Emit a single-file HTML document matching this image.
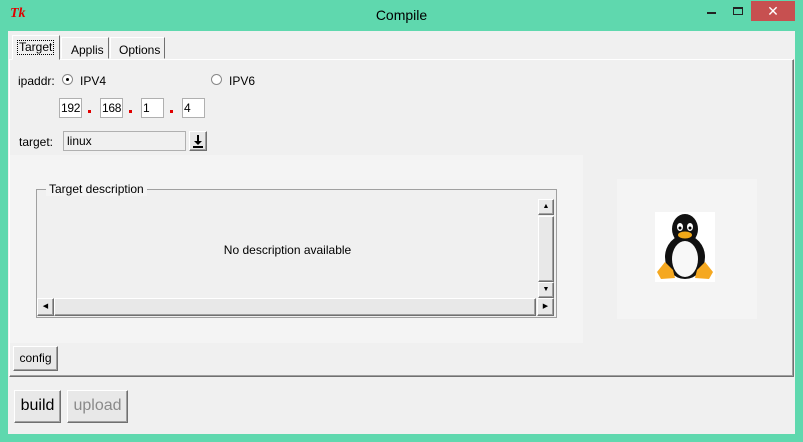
<!DOCTYPE html>
<html><head><style>
*{box-sizing:border-box;margin:0;padding:0}
body{width:803px;height:442px;background:#5fd8ae;font-family:"Liberation Sans",sans-serif;font-size:12px;color:#000;position:relative;overflow:hidden}
.a{position:absolute}
.client{left:8px;top:31px;width:787px;height:403px;background:#f0f0f0}
.btn{position:absolute;background:#e8e8e8;border:1px solid;border-color:#fff #707070 #707070 #fff;box-shadow:inset -1px -1px 0 #a0a0a0;text-align:center}
.entry{position:absolute;background:#fff;border:1px solid #b0b0b0;height:20px;padding:2px 0 0 1px;font-size:12px;letter-spacing:-0.3px;overflow:hidden}
.dot{position:absolute;width:3px;height:3px;background:#e00000}
.radio{position:absolute;width:11px;height:11px;border-radius:50%;border:1px solid #888;background:#fff}
</style></head><body>
<div class="a" style="left:10px;top:6px;color:#e00000;font-family:'Liberation Serif',serif;font-style:italic;font-weight:bold;font-size:14px">Tk</div>
<div class="a" style="left:0;width:803px;top:7px;text-align:center;font-size:14px;color:#000">Compile</div>
<div class="a" style="left:707px;top:12px;width:9px;height:2px;background:#222"></div>
<div class="a" style="left:733px;top:7px;width:10px;height:8px;border:1px solid #222;border-top-width:2px"></div>
<div class="a" style="left:751px;top:1px;width:44px;height:20px;background:#c75050;color:#fff;text-align:center;font-size:14px;line-height:20px">✕</div>
<div class="a client"></div>
<div class="a" style="left:9px;top:59px;width:785px;height:318px;border:1px solid;border-color:#fff #707070 #707070 #fff;background:#f0f0f0;box-shadow:inset -1px -1px 0 #a0a0a0"></div>
<div class="a" style="left:12px;top:35px;width:48px;height:25px;background:#f0f0f0;border:1px solid;border-color:#fff #707070 #f0f0f0 #fff"></div>
<div class="a" style="left:17px;top:40px;border:1px dotted #000;padding:0 1px;font-size:12px;line-height:13px">Target</div>
<div class="a" style="left:61px;top:37px;width:48px;height:22px;background:#f0f0f0;border:1px solid;border-color:#fff #707070 transparent #fff;padding:5px 0 0 9px">Applis</div>
<div class="a" style="left:110px;top:37px;width:55px;height:22px;background:#f0f0f0;border:1px solid;border-color:#fff #707070 transparent #fff;padding:5px 0 0 8px">Options</div>
<div class="a" style="left:18px;top:74px">ipaddr:</div>
<div class="radio" style="left:62px;top:74px"><div class="a" style="left:3px;top:3px;width:3px;height:3px;background:#000;border-radius:50%"></div></div>
<div class="a" style="left:80px;top:74px">IPV4</div>
<div class="radio" style="left:211px;top:74px"></div>
<div class="a" style="left:229px;top:74px">IPV6</div>
<div class="entry" style="left:59px;top:98px;width:23px">192</div>
<div class="dot" style="left:88px;top:110px"></div>
<div class="entry" style="left:100px;top:98px;width:23px">168</div>
<div class="dot" style="left:129px;top:110px"></div>
<div class="entry" style="left:141px;top:98px;width:23px">1</div>
<div class="dot" style="left:170px;top:110px"></div>
<div class="entry" style="left:182px;top:98px;width:23px">4</div>
<div class="a" style="left:19px;top:135px">target:</div>
<div class="a" style="left:63px;top:131px;width:123px;height:20px;background:#f0f0f0;border:1px solid #b0b0b0;padding:2px 0 0 3px">linux</div>
<div class="btn" style="left:189px;top:131px;width:18px;height:20px"><svg width="16" height="18" viewBox="0 0 16 18"><path d="M7 3h2v6h3l-4 4-4-4h3z" fill="#000"/><rect x="3" y="14" width="10" height="2" fill="#000"/></svg></div>
<div class="a" style="left:10px;top:155px;width:573px;height:188px;background:#f4f4f4"></div>
<div class="a" style="left:36px;top:189px;width:521px;height:129px;border:1px solid #a0a0a0;background:#f0f0f0"></div>
<div class="a" style="left:46px;top:182px;background:#f4f4f4;padding:0 3px">Target description</div>
<div class="a" style="left:37px;top:190px;width:501px;height:108px;text-align:center;line-height:120px">No description available</div>
<div class="btn" style="left:538px;top:199px;width:16px;height:16px;font-size:7px;line-height:14px">▲</div>
<div class="btn" style="left:538px;top:216px;width:16px;height:66px"></div>
<div class="btn" style="left:538px;top:282px;width:16px;height:16px;font-size:7px;line-height:14px">▼</div>
<div class="btn" style="left:37px;top:298px;width:17px;height:18px;font-size:7px;line-height:16px">◀</div>
<div class="btn" style="left:54px;top:298px;width:482px;height:18px"></div>
<div class="btn" style="left:537px;top:298px;width:17px;height:18px;font-size:7px;line-height:16px">▶</div>
<div class="a" style="left:617px;top:179px;width:140px;height:140px;background:#f4f4f4"></div>
<svg class="a" style="left:655px;top:212px" width="60" height="70" viewBox="0 0 60 70">
<rect width="60" height="70" fill="#fff"/>
<ellipse cx="30" cy="45" rx="20" ry="22" fill="#111"/>
<ellipse cx="30" cy="17" rx="13" ry="15" fill="#111"/>
<ellipse cx="30" cy="47" rx="13" ry="18" fill="#f8f8f8"/>
<ellipse cx="25" cy="15" rx="3" ry="4" fill="#fff"/><ellipse cx="35" cy="15" rx="3" ry="4" fill="#fff"/>
<circle cx="25" cy="16" r="1.5" fill="#000"/><circle cx="35" cy="16" r="1.5" fill="#000"/>
<ellipse cx="30" cy="23" rx="7" ry="3.5" fill="#f0a818"/>
<path d="M2 60 L10 50 L18 58 L20 66 L6 67Z" fill="#f5a820"/>
<path d="M58 60 L50 50 L42 58 L40 66 L54 67Z" fill="#f5a820"/>
</svg>
<div class="btn" style="left:13px;top:346px;width:45px;height:25px;line-height:22px">config</div>
<div class="btn" style="left:14px;top:390px;width:47px;height:33px;font-size:16px;line-height:30px">build</div>
<div class="btn" style="left:67px;top:390px;width:61px;height:33px;font-size:16px;line-height:30px;color:#8a8a8a">upload</div>
</body></html>
